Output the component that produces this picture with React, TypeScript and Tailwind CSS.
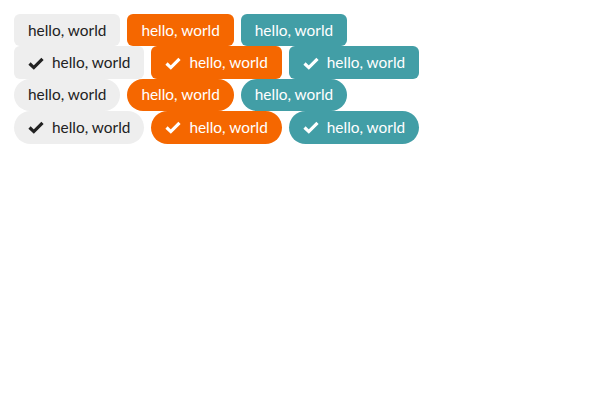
const variants = [
  "bg-[#eeeeee] text-[#222222]",
  "bg-[#f56700] text-white",
  "bg-[#429ea6] text-white",
];

function Check() {
  return (
    <svg width="16" height="16" viewBox="0 0 16 16" className="shrink-0">
      <path d="M1.5 8.5 L5.8 12.6 L14.5 3.8" fill="none" stroke="currentColor" strokeWidth="3.2" />
    </svg>
  );
}

function Tag({ cls, check, pill }: { cls: string; check: boolean; pill: boolean }) {
  return (
    <div
      className={`flex h-[32.4px] items-center gap-2 px-[14px] text-[15.4px] ${pill ? "rounded-full" : "rounded-md"} ${cls}`}
    >
      {check && <Check />}
      <span>hello, world</span>
    </div>
  );
}

export default function App() {
  const rows = [
    { check: false, pill: false },
    { check: true, pill: false },
    { check: false, pill: true },
    { check: true, pill: true },
  ];
  return (
    <div className="flex flex-col p-[14px]" style={{ fontFamily: "Lato, sans-serif" }}>
      {rows.map((r, i) => (
        <div key={i} className="flex gap-[7px]">
          {variants.map((v) => (
            <Tag key={v} cls={v} check={r.check} pill={r.pill} />
          ))}
        </div>
      ))}
    </div>
  );
}
